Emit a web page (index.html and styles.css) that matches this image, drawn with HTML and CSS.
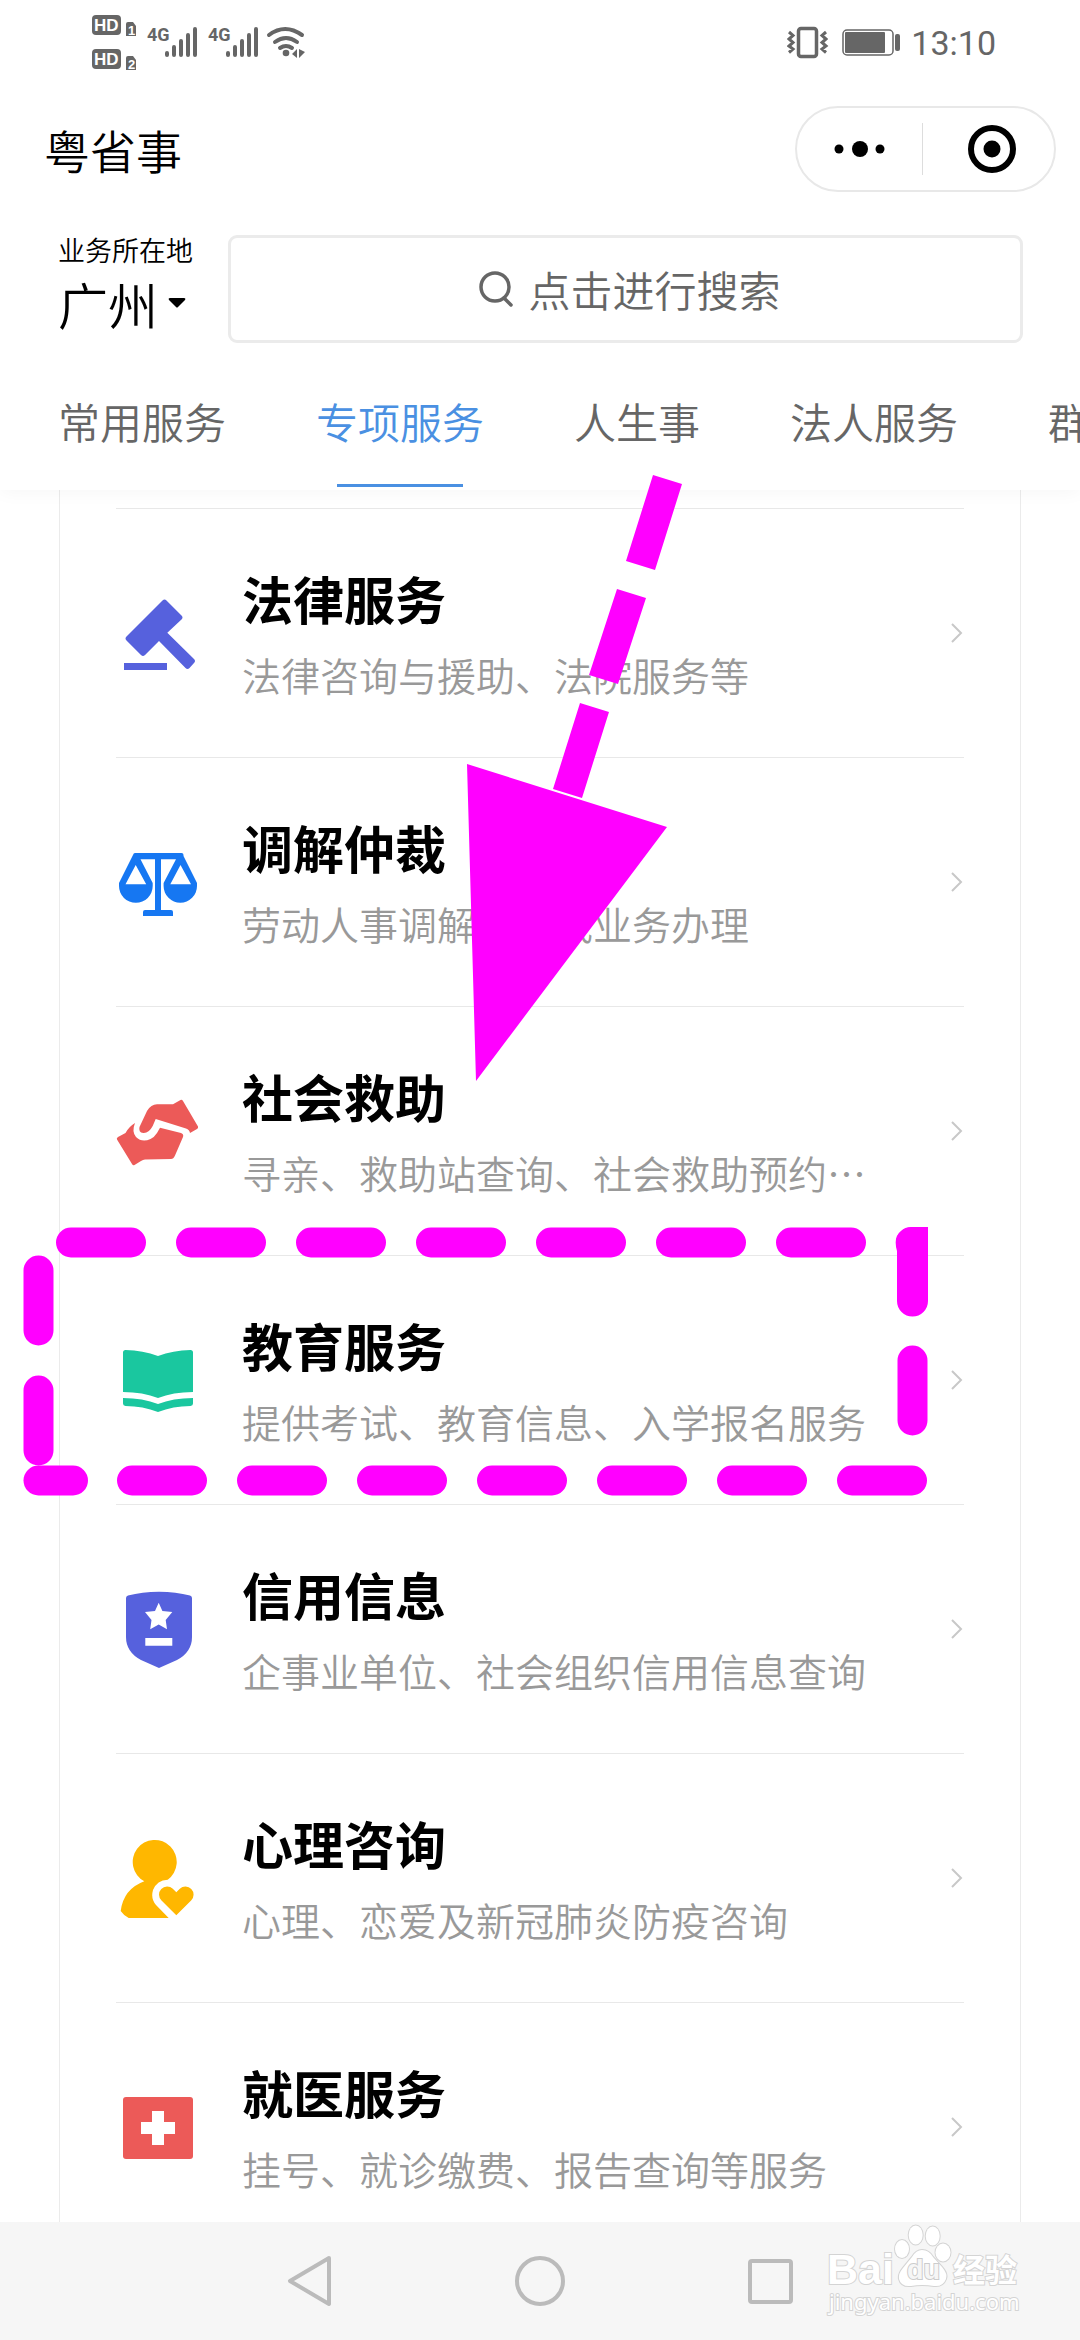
FILE: index.html
```html
<!DOCTYPE html>
<html lang="zh-CN">
<head>
<meta charset="utf-8">
<meta name="viewport" content="width=device-width, initial-scale=1">
<title>粤省事</title>
<link rel="stylesheet" href="styles.css">
</head>
<body>
<div class="app">
  <header class="header">
    <div class="status">
      <svg class="status-left" width="216" height="60" viewBox="92 12 216 60" aria-hidden="true">
        <g fill="#666">
          <rect x="92" y="15" width="29" height="20" rx="4"/>
          <rect x="92" y="49" width="29" height="20" rx="4"/>
          <path d="M126 24q0-2 2-2h5l3 4v10h-10zM126 58q0-2 2-2h5l3 4v10h-10z"/>
        </g>
        <g class="hd-text">
          <text x="94" y="31">HD</text>
          <text x="94" y="65">HD</text>
          <text class="sim-text" x="128" y="35">1</text>
          <text class="sim-text" x="128" y="69">2</text>
        </g>
        <g class="net-text">
          <text x="147" y="41">4G</text>
          <text x="208" y="41">4G</text>
        </g>
        <g stroke="#666" stroke-width="4" stroke-linecap="round">
          <path d="M167 53v2M174 47v8M181 41v14M188 35v20M195 29v26"/>
          <path d="M228 53v2M235 47v8M242 41v14M249 35v20M256 29v26"/>
        </g>
        <g fill="none" stroke="#666" stroke-width="4" stroke-linecap="round">
          <path d="M269 35q16-12 33 0M275 42q11-8 22 0M280 48q6-4 12 0"/>
        </g>
        <circle cx="286" cy="53" r="3.300" fill="#666"/>
        <path d="M297 49v9l-5-4zM299 49v9l6-6z" fill="#666"/>
      </svg>
      <div class="status-right">
        <svg width="42" height="34" viewBox="0 0 42 34" aria-hidden="true">
          <rect x="11.500" y="2.500" width="18" height="28" rx="2.500" fill="none" stroke="#666" stroke-width="3.500"/>
          <path d="M2 6l4 3.500-4 3.500 4 3.500-4 3.500 4 3-4 3.500M39 6l-4 3.500 4 3.500-4 3.500 4 3.500-4 3 4 3.500" fill="none" stroke="#666" stroke-width="3"/>
        </svg>
        <svg class="battery" width="59" height="28" viewBox="0 0 59 28" aria-hidden="true">
          <rect x="1" y="1" width="50" height="25" rx="4" fill="none" stroke="#666" stroke-width="1.500"/>
          <rect x="3" y="3" width="40" height="21" rx="1" fill="#666"/>
          <rect x="53" y="5" width="5" height="17" rx="2" fill="#666"/>
        </svg>
        <span class="clock">13:10</span>
      </div>
    </div>

    <div class="titlebar">
      <h1 class="title">粤省事</h1>
      <div class="capsule">
        <button class="capsule-btn" type="button" aria-label="更多">
          <svg width="52" height="18" viewBox="0 0 52 18"><circle cx="5" cy="9" r="4.500"/><circle cx="26" cy="9" r="8"/><circle cx="46" cy="9" r="4.500"/></svg>
        </button>
        <button class="capsule-btn capsule-close" type="button" aria-label="关闭">
          <svg width="48" height="48" viewBox="0 0 48 48"><circle cx="24" cy="24" r="21" fill="none" stroke="#000" stroke-width="6"/><circle cx="24" cy="24" r="8.500"/></svg>
        </button>
      </div>
    </div>

    <div class="searchbar">
      <button class="city" type="button">
        <span class="city-label">业务所在地</span>
        <span class="city-name">广州
          <svg width="18" height="12" viewBox="0 0 18 12" aria-hidden="true"><path d="M2 1h14q2 0 1 2l-7 7q-1 1-2 0L1 3Q0 1 2 1z"/></svg>
        </span>
      </button>
      <button class="search" type="button">
        <svg width="36" height="38" viewBox="0 0 36 38" aria-hidden="true"><g fill="none" stroke="#666" stroke-width="3.500" stroke-linecap="round"><circle cx="17" cy="17" r="14"/><path d="M26 28l7 7"/></g></svg>
        <span>点击进行搜索</span>
      </button>
    </div>

    <nav class="tabs">
      <a class="tab" href="#common">常用服务</a>
      <a class="tab tab-active" href="#special">专项服务</a>
      <a class="tab" href="#life">人生事</a>
      <a class="tab" href="#legal">法人服务</a>
      <a class="tab" href="#public">群众服务</a>
    </nav>
  </header>

  <main class="content">
    <div class="card">
      <a class="row" href="#law">
        <svg class="icon" viewBox="0 0 84 84" aria-hidden="true"><g fill="#5661dd"><path d="M46.500 9.500q2-2 4 0l15 15q2 2 0 4L51.300 41.700 78 68q2 2 0 4l-4.500 5q-2 2-4 0L43 50 29 64q-2 2-4 0L10.500 49.500q-2-2 0-4z"/><path d="M8 72h43v7H8z"/></g></svg>
        <div class="text"><h2 class="name">法律服务</h2><p class="desc">法律咨询与援助、法院服务等</p></div>
        <svg class="chevron" viewBox="0 0 13 22" aria-hidden="true"><path d="M1 2l9 9-9 9"/></svg>
      </a>
      <a class="row" href="#mediation">
        <svg class="icon" viewBox="0 0 84 84" aria-hidden="true"><g fill="#1677f2"><path d="M19 13h46.500q2 0 2 2v1L81 43v3a16.700 16.700 0 0 1-33.400 0v-3L60 19.300H45V70h10q2 0 2 2v4H27v-4q0-2 2-2h10V19.300H24.500L36.700 43v3A16.800 16.800 0 0 1 3 46v-3l14-28q.5-2 2-2z"/></g><path d="M19.700 25l10.500 19.300H9.500zM64.500 25L75 44.300H54.300z" fill="#fff"/></svg>
        <div class="text"><h2 class="name">调解仲裁</h2><p class="desc">劳动人事调解、仲裁业务办理</p></div>
        <svg class="chevron" viewBox="0 0 13 22" aria-hidden="true"><path d="M1 2l9 9-9 9"/></svg>
      </a>
      <a class="row" href="#aid">
        <svg class="icon" viewBox="0 0 84 84" aria-hidden="true"><g fill="#ec5a58"><path d="M57 15.300L64.500 11q1.500-.6 2.500 1l15 25.500q.5 1.500-1 2.500l-7 4q-.5-3.500-4-4.500L39.700 30l-3 7q-4 7.500-9.500 7-5-.5-3.700-6L31 22q4-6.700 10-6.700z"/><path d="M19 34q-3.500 8.500 1 14 6 6 14.500 2 4-2 6.500-6l3-5.300L65 44q3 1 2 4l-8 18.500q-1.500 3.500-4 3.500l-26 .5q-2 0-4 1.500l-6.500 4q-1.500.8-2.500-1L1 50.500q-.8-1.500 1-2.500l7.500-4q3.500-6.500 9.500-10z"/></g></svg>
        <div class="text"><h2 class="name">社会救助</h2><p class="desc">寻亲、救助站查询、社会救助预约⋯</p></div>
        <svg class="chevron" viewBox="0 0 13 22" aria-hidden="true"><path d="M1 2l9 9-9 9"/></svg>
      </a>
      <a class="row" href="#education">
        <svg class="icon" viewBox="0 0 84 84" aria-hidden="true"><g fill="#1ac79f"><path d="M7 14.500Q7 12 9.500 12 27 12.500 42 18 57 12.500 74.500 12q2.500 0 2.500 2.500V54Q57 54 42 60 27 54 7 54z"/><path d="M7 60q20 0 35 6 15-6 35-6v5.500q0 2.300-2.500 2.500Q57 68 42 74 27 68 9.500 68 7 67.800 7 65.500z"/></g></svg>
        <div class="text"><h2 class="name">教育服务</h2><p class="desc">提供考试、教育信息、入学报名服务</p></div>
        <svg class="chevron" viewBox="0 0 13 22" aria-hidden="true"><path d="M1 2l9 9-9 9"/></svg>
      </a>
      <a class="row" href="#credit">
        <svg class="icon" viewBox="0 0 84 84" aria-hidden="true"><path d="M12 8.500Q26 4.700 43 4.700t31 3.800q2 .6 2 2.500v39q0 15-15 23L43 81 25 73Q10 65 10 50V11q0-2 2-2.500z" fill="#5661dd"/><path d="M42.700 15.700l3.700 8.300 9.900 1-6.600 8 1.300 9.200-8.300-4.700-8.500 4.700 1.300-9.200-6.500-8 10-1zM29.300 51h27v7.700h-27z" fill="#fff"/></svg>
        <div class="text"><h2 class="name">信用信息</h2><p class="desc">企事业单位、社会组织信用信息查询</p></div>
        <svg class="chevron" viewBox="0 0 13 22" aria-hidden="true"><path d="M1 2l9 9-9 9"/></svg>
      </a>
      <a class="row" href="#psychology">
        <svg class="icon" viewBox="0 0 84 84" aria-hidden="true"><g fill="#ffb700"><path d="M51.700 43.700A22 22 0 1 0 28.300 45.300Q7.500 53 4.700 75q3 4.500 8 7h40L40 69q-5.500-6-3-15 4-10 14.700-10.300z"/><path d="M60.300 56.300l3.500-3.500a8 8 0 0 1 11.300 11.700L60.300 79.300 45.500 64.500a8 8 0 0 1 11.300-11.700z"/></g></svg>
        <div class="text"><h2 class="name">心理咨询</h2><p class="desc">心理、恋爱及新冠肺炎防疫咨询</p></div>
        <svg class="chevron" viewBox="0 0 13 22" aria-hidden="true"><path d="M1 2l9 9-9 9"/></svg>
      </a>
      <a class="row" href="#medical">
        <svg class="icon" viewBox="0 0 84 84" aria-hidden="true"><rect x="7" y="12" width="70" height="62" rx="3" fill="#ec5a58"/><path d="M36 26h12v11h11v12H48v11H36V49H25V37h11z" fill="#fff"/></svg>
        <div class="text"><h2 class="name">就医服务</h2><p class="desc">挂号、就诊缴费、报告查询等服务</p></div>
        <svg class="chevron" viewBox="0 0 13 22" aria-hidden="true"><path d="M1 2l9 9-9 9"/></svg>
      </a>
    </div>
  </main>

  <footer class="navbar">
    <button class="nav-btn" type="button" aria-label="返回"><svg width="52" height="52" viewBox="0 0 52 52"><path d="M45 3L6 26l39 23z"/></svg></button>
    <button class="nav-btn" type="button" aria-label="主页"><svg width="52" height="52" viewBox="0 0 52 52"><circle cx="26" cy="26" r="23"/></svg></button>
    <button class="nav-btn" type="button" aria-label="最近任务"><svg width="52" height="52" viewBox="0 0 52 52"><rect x="6" y="6" width="41" height="41" rx="2"/></svg></button>
    <svg class="watermark" width="210" height="104" viewBox="0 0 210 104">
      <text class="wm-logo" x="7" y="64">Bai</text>
      <g class="wm-paw">
        <ellipse cx="82" cy="29" rx="7" ry="9"/>
        <ellipse cx="95.700" cy="15" rx="7" ry="9.500"/>
        <ellipse cx="112.700" cy="16" rx="7" ry="9.500"/>
        <ellipse cx="123" cy="32.500" rx="7.500" ry="9"/>
        <path d="M102 30q7 0 11 7l9 10q6 7 4 12-3 8-12 7-12-2-23 0-10 1-12-7-1-5 4-11l9-11q4-7 10-7z"/>
      </g>
      <text class="wm-du" x="87" y="59">du</text>
      <text class="wm-cn" x="133" y="62">经验</text>
      <text class="wm-url" x="9" y="90">jingyan.baidu.com</text>
    </svg>
  </footer>

  <svg class="marks" width="1080" height="1520" viewBox="0 0 1080 1520" aria-hidden="true">
    <path d="M653 475l29 9-27 86-29-9zM617 589l29 9-28 86-29-9zM580 703l29 9-27 86-29-9zM467 764l200 63-191 254z"/>
    <g class="dash">
      <path d="M71 1242.500H913" />
      <path d="M132 1480.500H913" />
      <path d="M38.500 1480.500H73" class="solid"/>
      <path d="M38.500 1270.500V1451M912.500 1360.500V1421"/>
    </g>
    <path d="M911 1227h17v74a15.500 15.500 0 0 1-31 0v-50q-4-14 4-20 4-4 10-4z"/>
  </svg>
</div>
</body>
</html>
```

FILE: styles.css
```css
* {
  box-sizing: border-box;
}

body {
  margin: 0;
  background: #fff;
  color: #000;
  font-family: "Noto Sans CJK SC", "Noto Sans", sans-serif;
  font-weight: 350;
}

h1, h2, p {
  margin: 0;
}

a {
  color: inherit;
  text-decoration: none;
}

button {
  margin: 0;
  padding: 0;
  border: 0;
  background: none;
  color: inherit;
  font: inherit;
}

svg {
  display: block;
  flex: none;
}

.app {
  position: relative;
  display: flex;
  flex-direction: column;
  height: 100vh;
  overflow: hidden;
}

/* Header */
.header {
  position: relative;
  flex: none;
  background: #fff;
  box-shadow: 0 2px 18px rgba(0, 0, 0, 0.04);
}

.status {
  display: flex;
  justify-content: space-between;
  height: 84px;
  padding: 12px 84px 0 92px;
}

.hd-text {
  fill: #fff;
  font: 700 17px "Liberation Sans", sans-serif;
}

.sim-text {
  font-size: 13px;
}

.net-text {
  fill: #666;
  font: 700 18px "Roboto", sans-serif;
}

.status-right {
  display: flex;
  align-items: center;
  height: 61px;
}

.battery {
  margin: 0 10px 0 13px;
}

.clock {
  color: #666;
  font: 34px/40px "Roboto", sans-serif;
}

.titlebar {
  display: flex;
  align-items: center;
  justify-content: space-between;
  padding: 22px 24px 0 44px;
}

.title {
  font-size: 46px;
  font-weight: 350;
  line-height: 60px;
}

.capsule {
  display: flex;
  align-items: center;
  width: 261px;
  height: 86px;
  border: 2px solid #e8e8e8;
  border-radius: 43px;
}

.capsule-btn {
  display: flex;
  flex: 1;
  align-items: center;
  justify-content: center;
  height: 52px;
}

.capsule-close {
  border-left: 1px solid #ddd;
  padding-left: 6px;
}

.searchbar {
  display: flex;
  align-items: flex-start;
  padding: 43px 57px 0 58px;
}

.city {
  width: 170px;
  text-align: left;
}

.city-label {
  display: block;
  margin-bottom: 8px;
  font-size: 27px;
  line-height: 30px;
}

.city-name {
  display: flex;
  align-items: center;
  gap: 10px;
  font-size: 50px;
  line-height: 60px;
}

.search {
  display: flex;
  flex: 1;
  align-items: center;
  justify-content: center;
  gap: 14px;
  height: 108px;
  padding-left: 8px;
  border: 3px solid #ebebeb;
  border-radius: 9px;
  color: #666;
  font-size: 42px;
  line-height: 60px;
}

.tabs {
  display: flex;
  gap: 90px;
  padding: 48px 0 3px 58px;
  overflow: hidden;
  color: #666;
  font-size: 42px;
  line-height: 60px;
  white-space: nowrap;
}

.tab {
  flex: none;
}

.tab::after {
  display: block;
  width: 126px;
  height: 3px;
  margin: 33px auto 0;
  content: "";
}

.tab-active {
  color: #4a90e2;
}

.tab-active::after {
  background: #4a90e2;
}

/* Service list */
.content {
  flex: 1;
  min-height: 0;
  padding: 0 59px;
  overflow: hidden;
}

.card {
  padding: 18px 56px 0;
  border: solid #ebebeb;
  border-width: 0 1px;
}

.row {
  display: flex;
  align-items: center;
  border-top: 1px solid #e8e8e8;
}

.icon {
  width: 84px;
  height: 84px;
}

.text {
  flex: 1;
  min-width: 0;
  padding: 59px 0 59px 42px;
}

.name {
  margin-bottom: 22px;
  font-size: 51px;
  font-weight: 700;
  line-height: 60px;
}

.desc {
  color: #999;
  font-size: 39px;
  line-height: 48px;
  white-space: nowrap;
}

.chevron {
  width: 13px;
  height: 22px;
  fill: none;
  stroke: #c8c8c8;
  stroke-width: 2;
}

/* System navigation */
.navbar {
  position: relative;
  display: flex;
  flex: none;
  align-items: center;
  justify-content: center;
  gap: 178px;
  height: 118px;
  background: #f6f6f6;
}

.nav-btn svg {
  fill: none;
  stroke: #bbb;
  stroke-width: 4;
  stroke-linejoin: round;
}

.watermark {
  position: absolute;
  right: 50px;
  bottom: 16px;
  fill: #fff;
  stroke: #d4d4d4;
  stroke-width: 2;
  paint-order: stroke;
}

.wm-logo {
  font: 700 43px "Liberation Sans", sans-serif;
}

.wm-du {
  fill: #f6f6f6;
  stroke: #ccc;
  font: 700 27px "Liberation Sans", sans-serif;
}

.wm-cn {
  font-size: 32px;
  font-weight: 700;
}

.wm-url {
  font: 22px "Noto Sans", sans-serif;
}

/* Highlight arrow and dashed frame drawn over the page */
.marks {
  position: absolute;
  top: 0;
  left: 0;
  fill: #f0f;
  pointer-events: none;
}

.dash {
  fill: none;
  stroke: #f0f;
  stroke-width: 30;
  stroke-linecap: round;
  stroke-dasharray: 60 60;
}

.solid {
  stroke-dasharray: none;
}
```
